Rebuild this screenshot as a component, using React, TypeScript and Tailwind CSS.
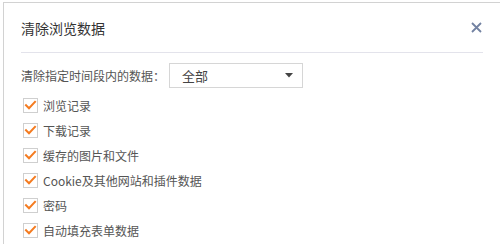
import React from "react";

const items = [
  "浏览记录",
  "下载记录",
  "缓存的图片和文件",
  "Cookie及其他网站和插件数据",
  "密码",
  "自动填充表单数据",
];

function Check() {
  return (
    <span className="flex h-[15px] w-[15px] items-center justify-center border border-[#cfcfcf] bg-white">
      <svg width="13" height="13" viewBox="0 0 13 13">
        <path d="M2 6.2 L5 9.3 L11 2.8" fill="none" stroke="#f47b20" strokeWidth="2" strokeLinecap="square" />
      </svg>
    </span>
  );
}

export default function App() {
  return (
    <div
      className="h-[244px] w-[500px] overflow-hidden bg-white pl-[3px] pt-[2px]"
      style={{ fontFamily: '"Noto Sans CJK SC", "Noto Sans", sans-serif' }}
    >
      <div className="h-full border-l border-t border-[#d2d2d2] pl-[17px] pr-[17px]">
        <div className="flex h-[50px] items-center justify-between border-b border-[#e3e3eb]">
          <span className="text-[14px] leading-none text-[#333]">清除浏览数据</span>
          <svg width="11" height="11" viewBox="0 0 11 11" className="mr-[1px]">
            <path d="M1 1 L10 10 M10 1 L1 10" stroke="#7382a2" strokeWidth="1.8" />
          </svg>
        </div>
        <div className="mt-[10px] flex items-center">
          <span className="w-[148px] text-[12px] leading-none text-[#555]">清除指定时间段内的数据：</span>
          <div className="flex h-[25px] w-[134px] items-center justify-between border border-[#d6d6d6] pl-[12px] pr-[9px]">
            <span className="text-[13px] leading-none text-[#444]">全部</span>
            <svg width="8" height="5" viewBox="0 0 8 5">
              <path d="M0 0 L8 0 L4 4.5 Z" fill="#444" />
            </svg>
          </div>
        </div>
        <div className="mt-[5px] flex flex-col">
          {items.map((t) => (
            <div key={t} className="flex h-[25px] items-center pl-[2px]">
              <Check />
              <span className="ml-[5px] text-[12px] leading-none text-[#555]">{t}</span>
            </div>
          ))}
        </div>
      </div>
    </div>
  );
}
